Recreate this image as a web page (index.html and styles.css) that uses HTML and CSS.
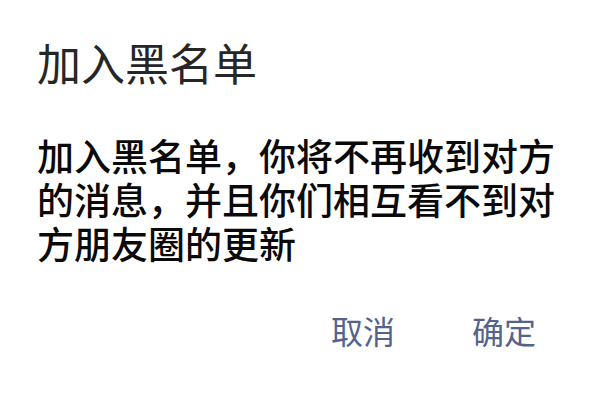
FILE: index.html
```html
<!DOCTYPE html>
<html lang="zh-CN">
<head>
<meta charset="utf-8">
<link rel="stylesheet" href="styles.css">
</head>
<body>
<div class="dialog">
  <div class="title">加入黑名单</div>
  <div class="content">加入黑名单，你将不再收到对方的消息，并且你们相互看不到对方朋友圈的更新</div>
  <div class="actions">
    <span class="btn">取消</span>
    <span class="btn">确定</span>
  </div>
</div>
</body>
</html>
```
FILE: styles.css
```css
html, body {
  margin: 0;
  padding: 0;
  background: #ffffff;
}
.dialog {
  width: 600px;
  height: 400px;
  box-sizing: border-box;
  padding: 36px 0 0 37px;
  font-family: "Noto Sans CJK SC", "Noto Sans", sans-serif;
}
.title {
  font-size: 44px;
  line-height: 52px;
  color: #262626;
  font-weight: 400;
}
.content {
  margin-top: 45px;
  width: 520px;
  font-size: 37px;
  line-height: 44px;
  color: #0a0a0a;
  font-weight: 500;
}
.actions {
  margin-top: 45px;
  display: flex;
  justify-content: flex-end;
  gap: 77px;
  padding-right: 64px;
}
.btn {
  font-size: 32px;
  line-height: 40px;
  color: #55638c;
}
```
